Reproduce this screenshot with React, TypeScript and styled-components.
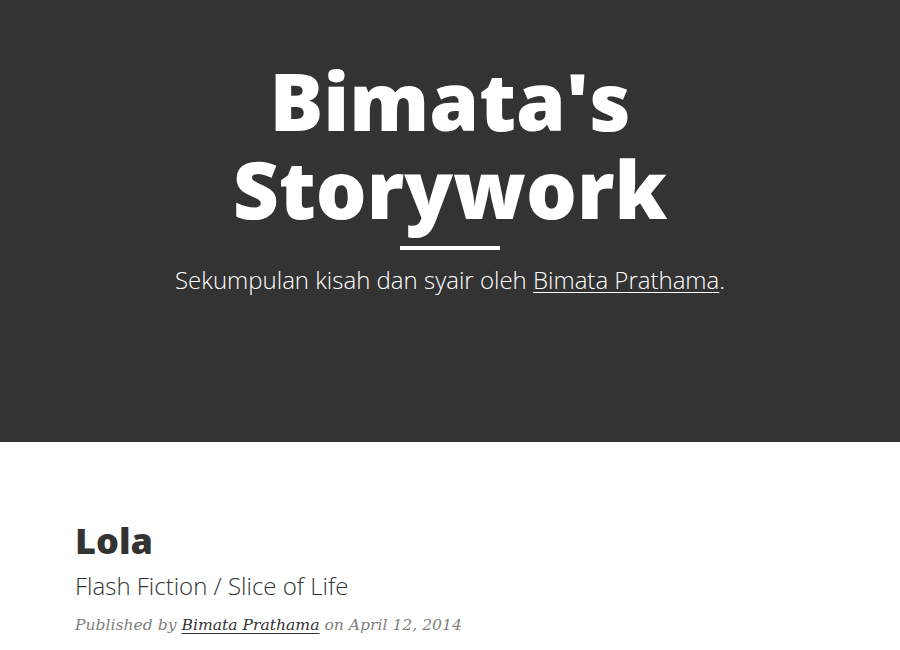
import React from "react";
import styled, { createGlobalStyle } from "styled-components";

const Global = createGlobalStyle`
  html, body { margin: 0; padding: 0; background: #fff; }
  body { font-family: "Open Sans", "Liberation Sans", sans-serif; color: #333; }
`;

const Page = styled.div`
  width: 900px;
  min-height: 650px;
  overflow: hidden;
`;

const Hero = styled.header`
  background: #333;
  height: 442px;
  box-sizing: border-box;
  padding-top: 56px;
  display: flex;
  flex-direction: column;
  align-items: center;
  text-align: center;
`;

const Title = styled.h1`
  margin: 0;
  font-family: "Open Sans", sans-serif;
  font-weight: 800;
  font-size: 80px;
  line-height: 88px;
  color: #fff;
  width: 480px;
`;

const Rule = styled.hr`
  width: 100px;
  height: 4px;
  border: 0;
  margin: 14px 0 0;
  background: #fff;
`;

const Tagline = styled.p`
  margin: 12px 0 0;
  font-family: "Open Sans", sans-serif;
  font-weight: 300;
  font-size: 24px;
  line-height: 36px;
  color: #fff;
`;

const HeroLink = styled.a`
  color: #fff;
  text-decoration: underline;
  text-underline-offset: 3px;
  text-decoration-thickness: 1px;
`;

const Main = styled.main`
  padding: 79px 75px 0;
`;

const PostTitle = styled.h2`
  margin: 0;
  font-family: "Open Sans", sans-serif;
  font-weight: 800;
  font-size: 36px;
  line-height: 40px;
  color: #333;
`;

const PostSubtitle = styled.h3`
  margin: 9px 0 0;
  font-family: "Open Sans", sans-serif;
  font-weight: 300;
  font-size: 24px;
  line-height: 32px;
  color: #333;
`;

const Meta = styled.p`
  margin: 10px 0 0;
  font-family: "DejaVu Serif", "Liberation Serif", serif;
  font-style: italic;
  font-size: 15.6px;
  line-height: 26px;
  color: #808080;
`;

const MetaLink = styled.a`
  color: #333;
  text-decoration: underline;
  text-underline-offset: 3px;
`;

export default function App() {
  return (
    <Page>
      <Global />
      <Hero>
        <Title>Bimata's Storywork</Title>
        <Rule />
        <Tagline>
          Sekumpulan kisah dan syair oleh <HeroLink href="#">Bimata Prathama</HeroLink>.
        </Tagline>
      </Hero>
      <Main>
        <PostTitle>Lola</PostTitle>
        <PostSubtitle>Flash Fiction / Slice of Life</PostSubtitle>
        <Meta>
          Published by <MetaLink href="#">Bimata Prathama</MetaLink> on April 12, 2014
        </Meta>
      </Main>
    </Page>
  );
}
